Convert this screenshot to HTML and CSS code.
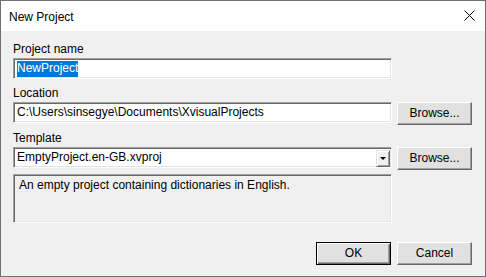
FILE: index.html
```html
<!DOCTYPE html>
<html>

<head>
    <meta charset="UTF-8">
    <title>New Project</title>
    <link rel="stylesheet" href="styles.css">
</head>

<body>

<div id="window">
    <div id="titlebar">
        <span class="title">New Project</span>
        <svg class="close" width="11" height="11" viewBox="0 0 11 11">
            <path d="M0.5 0.5 L10.5 10.5 M10.5 0.5 L0.5 10.5" stroke="#000" stroke-width="1" fill="none"/>
        </svg>
    </div>
    <div id="content">
        <div class="label">Project name</div>
        <div class="row name-row">
            <div class="field"><span class="sel">NewProject</span></div>
        </div>
        <div class="label">Location</div>
        <div class="row location-row">
            <div class="field">C:\Users\sinsegye\Documents\XvisualProjects</div>
            <div class="button">Browse...</div>
        </div>
        <div class="label">Template</div>
        <div class="row template-row">
            <div class="field combo">
                <span>EmptyProject.en-GB.xvproj</span>
                <span class="drop"><span class="tri"></span></span>
            </div>
            <div class="button">Browse...</div>
        </div>
        <div class="field desc">An empty project containing dictionaries in English.</div>
        <div class="actions">
            <div class="button default">OK</div>
            <div class="button">Cancel</div>
        </div>
    </div>
</div>

</body>

</html>
```

FILE: styles.css
```css
* {
    margin: 0;
    padding: 0;
    box-sizing: border-box;
}
body {
    font-family: "Liberation Sans", Arial, sans-serif;
    font-size: 12px;
    color: #000;
}
#window {
    width: 486px;
    height: 277px;
    border: 1px solid #707070;
    background: #f0f0f0;
    display: flex;
    flex-direction: column;
}
#titlebar {
    height: 30px;
    background: #fff;
    display: flex;
    align-items: center;
    justify-content: space-between;
    padding: 0 10px 0 8px;
}
#titlebar .title {
    font-size: 12px;
    line-height: 14px;
    margin-top: 1px;
}
#titlebar .close {
    display: block;
    margin-top: -2px;
}
#content {
    flex: 1;
    padding: 12px 13px 0 12px;
    display: flex;
    flex-direction: column;
}
.label {
    line-height: 13px;
    height: 13px;
    margin-bottom: 2px;
}
.row {
    display: flex;
    gap: 5px;
    align-items: flex-start;
}
.name-row {
    margin-bottom: 8px;
}
.location-row {
    margin-bottom: 7px;
}
.template-row {
    margin-bottom: 4px;
}
.field {
    width: 379px;
    height: 21px;
    background: #fff;
    border: 1px solid;
    border-color: #a0a0a0 #fff #fff #a0a0a0;
    box-shadow: inset 1px 1px #696969, inset -1px -1px #e3e3e3;
    padding: 3px 3px 0 3px;
    line-height: 13px;
    white-space: nowrap;
}
.sel {
    background: #0078d7;
    color: #fff;
    display: inline-block;
    padding: 1px 0 2px 0;
    margin-top: -1px;
}
.button {
    width: 75px;
    height: 23px;
    background: #e1e1e1;
    border: 1px solid;
    border-color: #fff #696969 #696969 #fff;
    box-shadow: inset -1px -1px #a0a0a0, inset 1px 1px #e3e3e3;
    text-align: center;
    line-height: 20px;
    cursor: pointer;
}
.button.default {
    border-color: #000;
    box-shadow: inset 1px 1px #fff, inset -1px -1px #696969, inset -2px -2px #a0a0a0;
}
.combo {
    display: flex;
    justify-content: space-between;
    padding-right: 1px;
}
.combo .drop {
    width: 14px;
    height: 17px;
    margin-top: -1px;
    background: #f0f0f0;
    border: 1px solid;
    border-color: #e3e3e3 #696969 #696969 #e3e3e3;
    box-shadow: inset 1px 1px #fff, inset -1px -1px #a0a0a0;
    display: flex;
    align-items: center;
    justify-content: center;
}
.tri {
    width: 0;
    height: 0;
    border-left: 3px solid transparent;
    border-right: 3px solid transparent;
    border-top: 3px solid #000;
}
.desc {
    height: 49px;
    background: #f0f0f0;
    padding: 4px 4px 0 5px;
    white-space: normal;
}
.actions {
    display: flex;
    justify-content: flex-end;
    gap: 6px;
    margin-top: 19px;
}
```
